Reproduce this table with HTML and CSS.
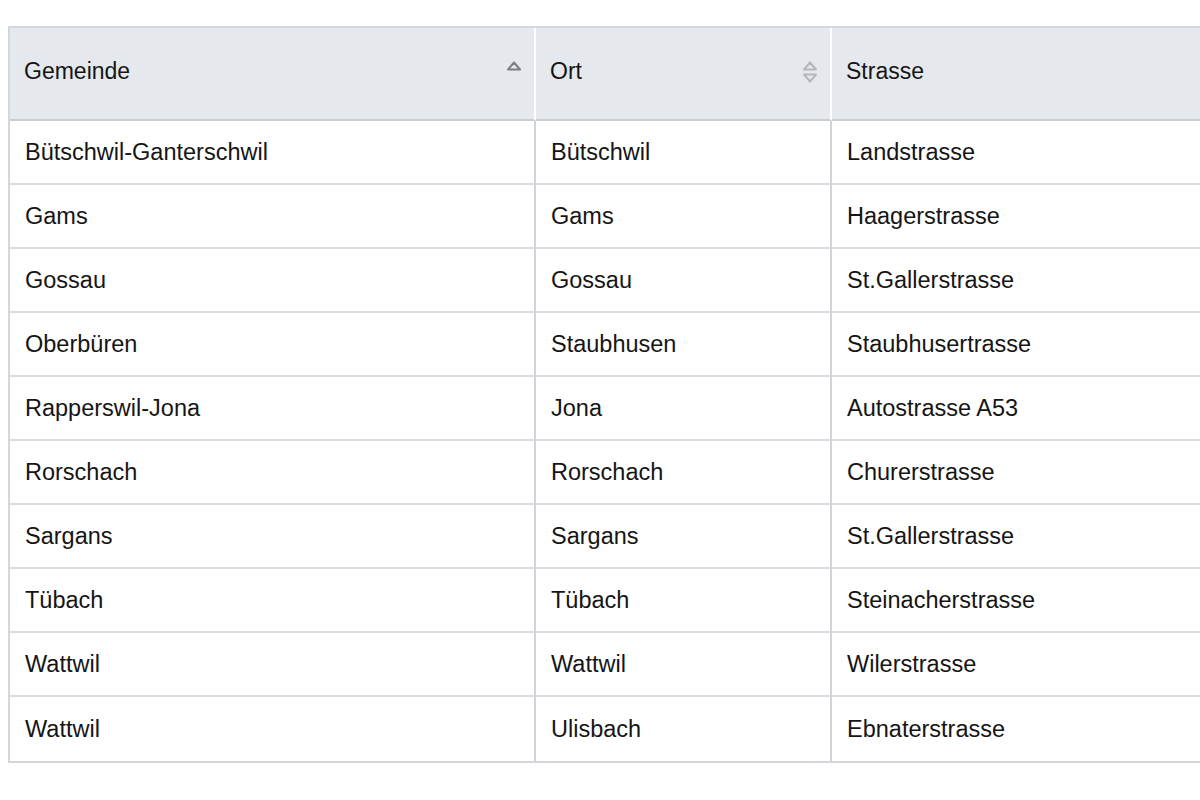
FILE: index.html
```html
<!DOCTYPE html>
<html lang="de">
<head>
<meta charset="utf-8">
<title>Strassen</title>
<link rel="stylesheet" href="styles.css">
</head>
<body>
<div class="wrap">
<table class="grid">
  <thead>
    <tr>
      <th class="c1"><div class="hcell"><span>Gemeinde</span>
        <svg class="sort" width="16" height="26" viewBox="0 0 16 26"><path d="M8 3.5 L14 10.5 L2 10.5 Z" fill="none" stroke="#7d7f82" stroke-width="2" stroke-linejoin="round"/></svg>
      </div></th>
      <th class="c2"><div class="hcell"><span>Ort</span>
        <svg class="sort" width="16" height="26" viewBox="0 0 16 26"><path d="M8 3.5 L14 10.5 L2 10.5 Z" fill="none" stroke="#b4b7ba" stroke-width="2" stroke-linejoin="round"/><path d="M2 15.5 L14 15.5 L8 22.5 Z" fill="none" stroke="#b4b7ba" stroke-width="2" stroke-linejoin="round"/></svg>
      </div></th>
      <th class="c3"><div class="hcell"><span>Strasse</span></div></th>
    </tr>
  </thead>
  <tbody>
    <tr><td>Bütschwil-Ganterschwil</td><td>Bütschwil</td><td>Landstrasse</td></tr>
    <tr><td>Gams</td><td>Gams</td><td>Haagerstrasse</td></tr>
    <tr><td>Gossau</td><td>Gossau</td><td>St.Gallerstrasse</td></tr>
    <tr><td>Oberbüren</td><td>Staubhusen</td><td>Staubhusertrasse</td></tr>
    <tr><td>Rapperswil-Jona</td><td>Jona</td><td>Autostrasse A53</td></tr>
    <tr><td>Rorschach</td><td>Rorschach</td><td>Churerstrasse</td></tr>
    <tr><td>Sargans</td><td>Sargans</td><td>St.Gallerstrasse</td></tr>
    <tr><td>Tübach</td><td>Tübach</td><td>Steinacherstrasse</td></tr>
    <tr><td>Wattwil</td><td>Wattwil</td><td>Wilerstrasse</td></tr>
    <tr><td>Wattwil</td><td>Ulisbach</td><td>Ebnaterstrasse</td></tr>
  </tbody>
</table>
</div>
</body>
</html>
```
FILE: styles.css
```css
html, body {
  margin: 0;
  padding: 0;
  background: #ffffff;
  overflow: hidden;
}
body {
  font-family: "Liberation Sans", Arial, Helvetica, sans-serif;
  color: #151515;
}
.wrap {
  padding: 26px 0 0 8px;
  width: 1600px;
}
.grid {
  border-collapse: separate;
  border-spacing: 0;
  border: 2px solid #d3d7dc;
  table-layout: fixed;
  width: 1400px;
  font-size: 23.5px;
}
.grid th, .grid td {
  padding: 0 0 0 15px;
  text-align: left;
  font-weight: normal;
  box-sizing: border-box;
  white-space: nowrap;
}
.grid th {
  background: #e5e8ec;
  height: 93px;
  font-size: 23px;
  border-bottom: 2px solid #c9ced4;
  border-right: 2px solid #ffffff;
  padding-left: 14px;
  padding-right: 12px;
  padding-bottom: 4px;
}
.grid th.c3 { border-right: none; }
.c1 { width: 526px; }
.c2 { width: 296px; }
.hcell {
  display: flex;
  align-items: center;
  justify-content: space-between;
}
.sort { display: block; flex: none; }
.grid td {
  height: 64px;
  border-bottom: 2px solid #d9dde1;
  border-right: 2px solid #cfd4d9;
  vertical-align: middle;
}
.grid td:last-child { border-right: none; }
.grid tbody tr:last-child td { border-bottom: none; }
```
